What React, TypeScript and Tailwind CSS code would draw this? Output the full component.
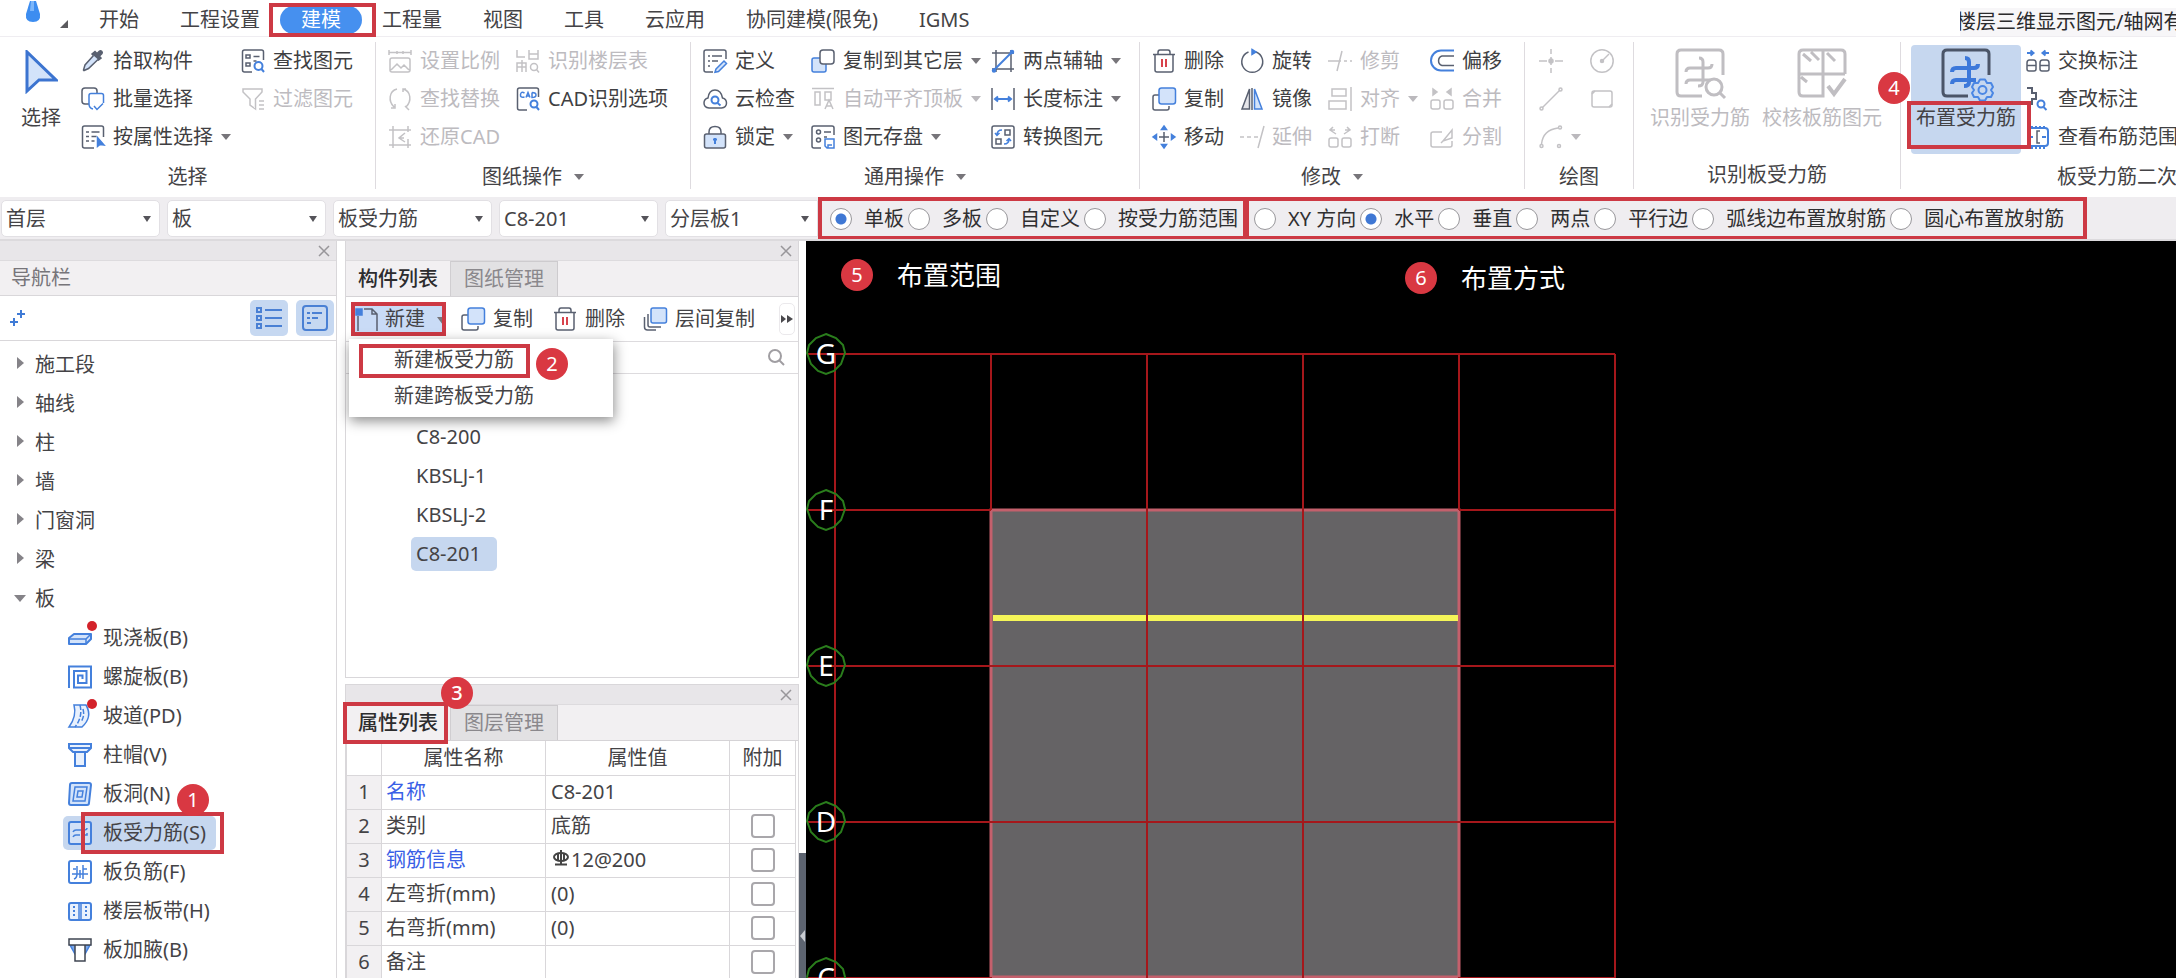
import { useState } from "react";
import type { ReactNode } from "react";
import clsx from "clsx";

const DARK = "#596070";
const BLUE = "#4480dc";
const PALE = "#d3e3fa";
const GRAY = "#c3c2c5";
const RED = "#d8434c";

const icons: Record<string, ReactNode> = {
  dropper: (
    <g stroke={DARK}>
      <path d="M14 2.5l2 2 2.5-2.5c1.500-1 3.500 1 2.500 2.500L18.500 7l1.500 2-2.500 2L11 5z" fill={DARK} />
      <path d="M12.500 6.500L4 16l-1.500 5 .5.5 4.500-2L17 10.500" fill={PALE} />
    </g>
  ),
  batch: (
    <>
      <rect x="1" y="1" width="15" height="16" rx="3" stroke={DARK} />
      <path d="M8 8.500q0-2 2-2h10.500q2 0 2 2V18l-7.500 5.500-3-1.500q-4-1-4-5z" stroke="none" fill="#fff" />
      <path d="M12 22q-4-1-4-5V8.500q0-2 2-2h10.500q2 0 2 2V16" stroke={BLUE} />
      <path d="M13 19l3 3.500 6-6" stroke={BLUE} />
    </>
  ),
  byProp: (
    <>
      <path d="M22.500 12V3q0-2-2-2h-17q-2 0-2 2v18q0 2 2 2H13" stroke={DARK} />
      <path d="M5 7h3M10.500 7h8M5 11.500h3M10.500 11.500h5M5 16h3M10.500 16h3" stroke={DARK} />
      <path d="M16.500 12.500v9l2.500-2 4 .5z" fill={BLUE} stroke={BLUE} />
    </>
  ),
  findEl: (
    <>
      <path d="M22.500 11V3q0-2-2-2h-17q-2 0-2 2v18q0 2 2 2H11" stroke={DARK} />
      <path d="M5 6h4v3H5zM5 14h4v3H5zM12.500 7.500h6M12.500 12h3" stroke={DARK} />
      <circle cx="17.500" cy="17" r="4" stroke={BLUE} strokeWidth="2" />
      <path d="M20.500 20l2.500 3" stroke={BLUE} strokeWidth="2" />
    </>
  ),
  filter: <path d="M2 2h19v3l-6.500 7v10L9 18v-6L2 5zM18 14h5M18 18h5M18 22h5" stroke={GRAY} />,
  scale: <path d="M1 3.500h22M1 1v5M23 1v5M9 2v3M15 2v3M2 11q0-2 2-2h16q2 0 2 2v10q0 2-2 2H4q-2 0-2-2zM3 21l6-6 4 4 3-3 5 5" stroke={GRAY} />,
  replace: <path d="M9 2C1 4 0 14 6 20M3 21h4v-4M15 2c8 2 9 12 3 18M15 5V2h3M17 19l4 4" stroke={GRAY} />,
  restoreCad: <path d="M5 1v22M1 5h22M1 20h22M20 14v9M20 1v6M17 8l-6 5 6 4M11 13h5" stroke={GRAY} />,
  floorTable: (
    <>
      <path d="M1 1v7h8M13 1v9h9V1M13 5h9M1 23v-9h9v9M1 18h9M6 11v12" stroke={GRAY} />
      <circle cx="18" cy="18" r="3.500" stroke={GRAY} />
      <path d="M20.500 20.500l2.500 3" stroke={GRAY} />
    </>
  ),
  cadOptions: (
    <>
      <path d="M22.500 10V3q0-2-2-2h-17q-2 0-2 2v18q0 2 2 2H11" stroke={DARK} />
      <path d="M8.500 6Q5 4 4.500 7.500T8.500 10M10 10.500l2-5 2 5M10.500 9h3M16 5.500v5q4 0 4-2.500t-4-2.500" stroke={BLUE} />
      <circle cx="18" cy="17" r="3.500" stroke={BLUE} strokeWidth="2" />
      <path d="M20.500 20l2.500 3" stroke={BLUE} strokeWidth="2" />
    </>
  ),
  define: (
    <>
      <path d="M23 10V3q0-2-2-2H3Q1 1 1 3v18q0 2 2 2h7M5 7h2M9 7h10M5 12h2M9 12h6M5 17h2" stroke={DARK} />
      <path d="M13 20l8-8 2.500 2.500-8 8-3.500.8z" stroke={BLUE} fill={PALE} />
    </>
  ),
  cloud: (
    <>
      <path d="M6 21q-5-.5-5-5 0-4 4-5Q6 3 12 3t7.500 8q4 1 4 5 0 4.500-5 5z" stroke={DARK} />
      <circle cx="12" cy="13" r="3.500" stroke={BLUE} strokeWidth="2" />
      <path d="M14.500 16l3 2.500" stroke={BLUE} strokeWidth="2" />
    </>
  ),
  lock: (
    <>
      <path d="M6 9V7q0-5.500 6-5.500T18 7v2" stroke={DARK} />
      <rect x="1.500" y="9" width="21" height="14" rx="2" stroke={DARK} fill={PALE} />
      <path d="M12 13v6M10 14.500h4" stroke={BLUE} strokeWidth="2" />
    </>
  ),
  copyFloor: (
    <>
      <rect x="1" y="9" width="14" height="14" rx="2" stroke={BLUE} fill={PALE} />
      <rect x="9" y="1" width="14" height="14" rx="3" stroke={DARK} fill="#fff" />
    </>
  ),
  alignTop: <path d="M1 1.500h22M4 5h5v13H4zM14 5h6v8h-6zM14 22l4-9 4 9M15.500 19h5" stroke={GRAY} />,
  saveEl: (
    <>
      <path d="M23 10V3q0-2-2-2H3Q1 1 1 3v18q0 2 2 2h7M13 7h7M13 12h3" stroke={DARK} />
      <circle cx="7.500" cy="7" r="2" stroke={DARK} />
      <circle cx="7.500" cy="15" r="2" stroke={DARK} />
      <path d="M14 14h9v9h-7l-2-2zM17 23v-3h4" stroke={BLUE} />
    </>
  ),
  twoPoint: (
    <>
      <path d="M5 1v22M1 4h22M1 20h22M20 1v22" stroke={DARK} />
      <path d="M3 21L21 3" stroke={BLUE} strokeWidth="2" />
      <circle cx="3" cy="21.500" r="1.500" fill={BLUE} stroke={BLUE} />
      <circle cx="21" cy="3" r="1.500" fill={BLUE} stroke={BLUE} />
    </>
  ),
  lengthDim: (
    <>
      <path d="M1 1v22M23 1v22" stroke={DARK} />
      <path d="M4 12h16M7 9.500L4 12l3 2.500M17 9.500l3 2.500-3 2.500" stroke={BLUE} strokeWidth="2" />
    </>
  ),
  convert: (
    <>
      <rect x="1" y="1" width="22" height="22" rx="2" stroke={DARK} />
      <path d="M14 5h5v5h-5zM5 14h5v5H5z" stroke={DARK} />
      <path d="M11 5q-5 0-5 5M4 8l2 2.500L8.500 8M13 19q5 0 5-5M15.500 16l2.500-2.500 2 2.500" stroke={BLUE} />
    </>
  ),
  trash: (
    <>
      <path d="M1 5.500h22M6 5V3.500Q6 1 8 1h8q2 0 2 2.500V5M3 6v15q0 2 2 2h14q2 0 2-2V6" stroke={DARK} />
      <path d="M10 10v8M14 10v8" stroke={RED} strokeWidth="2" />
    </>
  ),
  copy: (
    <>
      <path d="M7 8H3q-2 0-2 2v11q0 2 2 2h12q2 0 2-2v-2" stroke={DARK} />
      <rect x="7" y="1" width="16.500" height="16" rx="2.500" stroke={BLUE} fill={PALE} />
    </>
  ),
  move: (
    <>
      <path d="M12 7v10M7 12h10" stroke={DARK} />
      <path d="M12 1l2.500 3.500h-5zM12 23l2.500-3.500h-5zM1 12l3.500 2.500v-5zM23 12l-3.500 2.500v-5z" fill={BLUE} stroke={BLUE} />
    </>
  ),
  rotate: (
    <>
      <path d="M8.500 3a10.500 10.500 0 1 0 7.500 0" stroke={DARK} />
      <path d="M12 .5l4 2.500-4 2.500z" fill={BLUE} stroke={BLUE} />
    </>
  ),
  mirror: (
    <>
      <path d="M9.500 2v20H2z" stroke={DARK} fill="#e6e6ea" />
      <path d="M14.500 2v20H22z" stroke={BLUE} fill={PALE} />
      <path d="M12 1v22" stroke={DARK} />
    </>
  ),
  extend: <path d="M0 12h4M7 12h4M14 12h4M24 1l-6 22" stroke={GRAY} />,
  trim: <path d="M0 12h13M16 12h3M22 12h2M14 2L9 22" stroke={GRAY} />,
  align: <path d="M4 2h14v7H4zM1 14h17v8H1zM23 0v24" stroke={GRAY} />,
  breakUp: (
    <g stroke={GRAY}>
      <rect x="1" y="13" width="9" height="9" rx="2" />
      <rect x="14" y="13" width="9" height="9" rx="2" />
      <path d="M8 9L2 5l3-3M2 5h5M16 9l6-4-3-3M22 5h-5" />
    </g>
  ),
  offset: (
    <>
      <path d="M24 1.500H11a10 10 0 0 0 0 20h13" stroke={BLUE} strokeWidth="2" />
      <path d="M24 7H12a5 5 0 0 0 0 9.500h12" stroke={DARK} />
    </>
  ),
  merge: (
    <g stroke={GRAY}>
      <rect x="1" y="13" width="9" height="9" rx="2" />
      <rect x="14" y="13" width="9" height="9" rx="2" />
      <path d="M3 2v6l4-3zM21 2v6l-4-3z" fill={GRAY} />
    </g>
  ),
  split: <path d="M12 7H3Q1 7 1 9v11q0 2 2 2h17q2 0 2-2v-4M13 16l9-11v8zM11 18l3-3" stroke={GRAY} />,
  point: (
    <g stroke={GRAY}>
      <path d="M12 0v5M12 19v5M0 12h8M16 12h8M12 8v8" />
      <circle cx="12" cy="12" r="2" fill={GRAY} />
    </g>
  ),
  circle: (
    <g stroke={GRAY}>
      <circle cx="12" cy="12" r="11.200" />
      <path d="M12 12l7-7" />
      <circle cx="12" cy="12" r="1.500" fill={GRAY} />
    </g>
  ),
  line: (
    <g stroke={GRAY}>
      <path d="M3.500 20.500l17-17" />
      <circle cx="2.500" cy="21.500" r="1.500" />
      <circle cx="21.500" cy="2.500" r="1.500" />
    </g>
  ),
  rect: (
    <g stroke={GRAY}>
      <rect x="2" y="4" width="20" height="16" rx="2" />
      <path d="M2 7l3-3M19 20l3-3" />
    </g>
  ),
  arc: (
    <g stroke={GRAY}>
      <path d="M2.500 19Q4 5 19 3" />
      <circle cx="2.500" cy="21" r="1.500" />
      <circle cx="21" cy="2.500" r="1.500" />
      <circle cx="20" cy="21" r="1.500" />
    </g>
  ),
  swapDim: (
    <>
      <path d="M1 4h6M4.500 1.500L7.500 4l-3 2.500M23 4h-6M19.500 1.500L16.500 4l3 2.500" stroke={BLUE} strokeWidth="2" />
      <path d="M1 14q0-3 2.500-3h4Q10 11 10 14v6q0 2-2 2H3q-2 0-2-2zM1 16.500h9M14 14q0-3 2.500-3h4q2.500 0 2.500 3v6q0 2-2 2h-5q-2 0-2-2zM14 16.500h9" stroke={DARK} />
    </>
  ),
  checkDim: (
    <>
      <path d="M1 1h5v5h4v6H6v5H3v6" stroke={DARK} strokeWidth="2" />
      <circle cx="15" cy="17" r="3.500" stroke={BLUE} strokeWidth="2" />
      <path d="M17.500 20l3 3" stroke={BLUE} strokeWidth="2" />
    </>
  ),
  viewRange: (
    <>
      <path d="M2 3h17q3 0 3 3v12q0 3-3 3H2" stroke={BLUE} strokeWidth="2" />
      <path d="M2 1v2M6 1v2M10 1v2M14 1v2M18 1v2M2 21v3M6 21v3M10 21v3M14 21v3M18 21v3M3 12h4M16 12h4" stroke={BLUE} strokeWidth="2" />
      <path d="M14 6h-3v12h3" stroke={DARK} />
    </>
  ),
  newFile: (
    <>
      <path d="M9 2h8l5 5v17M17 2v5h5M3 24V9" stroke={DARK} />
      <path d="M1 2h6v6H1z" fill={BLUE} stroke={BLUE} />
    </>
  ),
  copyBetween: (
    <>
      <path d="M5 7v11q0 2 2 2h11M1.500 10v10q0 3 3 3H13" stroke={DARK} />
      <rect x="8" y="1" width="15.500" height="15" rx="2" stroke={BLUE} fill={PALE} />
    </>
  ),
  slab: (
    <g stroke={BLUE}>
      <path d="M1 12l5-4h17v5l-5 5H1z" fill={PALE} strokeWidth="2" strokeLinejoin="round" />
      <path d="M1 13h17l5-5M18 13v5" />
    </g>
  ),
  spiral: <path d="M1 23V1.500h22v21H6V6h12.500v12H10v-7.500h4.500V14" stroke={BLUE} strokeWidth="2" />,
  ramp: (
    <>
      <path d="M6 1h12q7 12-4 22H1Q9 12 6 1z" stroke={BLUE} fill="#e9f1fd" />
      <path d="M12 1q3 12-5 22M15 5q2 7-2 13" stroke={BLUE} strokeDasharray="5 2" />
    </>
  ),
  capital: <path d="M1 1h22v4l-4 4H5L1 5zM1 5h22M7 9v14h10V9" stroke={BLUE} fill="#e9f1fd" strokeWidth="2" />,
  opening: (
    <g stroke={BLUE}>
      <path d="M4 1h17q2 0 2 2l-2 18q0 2-2 2H3q-2 0-2-2L2 3q0-2 2-2z" fill={PALE} strokeWidth="2" />
      <path d="M7 5h12l-2 14H5z" />
      <path d="M10 9h5l-1 6H9z" />
    </g>
  ),
  rebar: (
    <g stroke={BLUE}>
      <rect x="1" y="1" width="22" height="22" rx="2" fill="#d3e1f7" strokeWidth="2" />
      <path d="M5 11q1-2 3-2h8q3 0 3-2M5 16q1-2 3-2h4M19 12v2h-6" />
    </g>
  ),
  negRebar: (
    <g stroke={BLUE}>
      <rect x="1" y="1" width="22" height="22" rx="2" strokeWidth="2" />
      <path d="M5 9h3M15 9h4M4 14h16M9 6v8q0 4-3 5M15 5v14M12 10v8" />
    </g>
  ),
  strip: (
    <g stroke={BLUE}>
      <rect x="1" y="4" width="22" height="17" rx="2" fill="#e9f1fd" strokeWidth="2" />
      <path d="M11 4v17M13 4v17" />
      <path d="M6 7v12M18 7v12" strokeDasharray="2 2" strokeWidth="2" />
    </g>
  ),
  haunch: (
    <>
      <path d="M2 7h20l-5 9H7z" fill="#7ba8ee" stroke={BLUE} />
      <path d="M1 1h22v6H1zM7 7v16h10V7" stroke="#3f4552" fill="#fff" />
    </>
  ),
};

function Icon({ name }: { name: string }) {
  return (
    <svg viewBox="0 0 24 24" className="size-6 shrink-0 overflow-visible" fill="none" strokeWidth="1.500" aria-hidden="true">
      {icons[name]}
    </svg>
  );
}

function Caret({ muted }: { muted?: boolean }) {
  return (
    <svg viewBox="0 0 10 6" className="h-[6px] w-[10px] shrink-0" aria-hidden="true">
      <path d="M0 0h10L5 6z" fill={muted ? "#bbb9bd" : "#77757a"} />
    </svg>
  );
}

function Badge({ n, className }: { n: number; className?: string }) {
  return (
    <span
      className={clsx(
        "flex size-8 items-center justify-center rounded-full bg-[#d93842] text-[20px] leading-none text-white",
        className
      )}
    >
      {n}
    </span>
  );
}

// red frame drawn over a control
function Frame({ className }: { className: string }) {
  return <span className={clsx("pointer-events-none absolute z-10 border-4 border-[#cd3944]", className)} />;
}

interface Tool {
  icon: string;
  label?: string;
  off?: boolean;
  caret?: boolean;
}

function ToolColumn({ tools, className }: { tools: Tool[]; className?: string }) {
  return (
    <div className={clsx("shrink-0", className)}>
      {tools.map((t) => (
        <button
          key={t.icon}
          aria-label={t.label || t.icon}
          className={clsx("flex h-[38px] items-center gap-2", t.off ? "text-[#bdbbbf]" : "text-[#3f3f42]")}
        >
          <Icon name={t.icon} />
          {t.label}
          {t.caret && <Caret muted={t.off} />}
        </button>
      ))}
    </div>
  );
}

function Group({
  label,
  caret,
  className,
  bodyClass,
  labelClass = "justify-center",
  last,
  children,
}: {
  label: string;
  caret?: boolean;
  className: string;
  bodyClass: string;
  labelClass?: string;
  last?: boolean;
  children: ReactNode;
}) {
  return (
    <>
      <section className={clsx("flex flex-col", className)}>
        <div className={clsx("flex h-[114px]", bodyClass)}>{children}</div>
        <div className={clsx("flex h-11 items-center gap-3", labelClass)}>
          {label}
          {caret && <Caret />}
        </div>
      </section>
      {!last && <div className="mb-2 w-px shrink-0 bg-[#dedbdf]" />}
    </>
  );
}

const tabs = ["开始", "工程设置", "建模", "工程量", "视图", "工具", "云应用", "协同建模(限免)", "IGMS"];

function TabBar() {
  const [active, setActive] = useState("建模");
  return (
    <header className="flex h-[37px] shrink-0 items-center border-b border-[#efedf1]">
      <svg viewBox="0 0 16 22" className="mb-3 ml-[25px] h-[22px] w-4 shrink-0" aria-hidden="true">
        <path d="M5 0h6l4 13q1 8-7 8T1 13z" fill="#3d8df0" />
        <path d="M6 0h3v10H5z" fill="#7cb6fa" />
      </svg>
      <svg viewBox="0 0 8 8" className="mt-3 ml-[19px] size-[8px] shrink-0" aria-hidden="true">
        <path d="M8 0v8H0z" fill="#5b5a5e" />
      </svg>
      <nav className="ml-[31px] flex items-center gap-[41px] pt-1">
        {tabs.map((t) =>
          t === active ? (
            <div key={t} className="relative -mx-[21px]">
              <button className="h-[28px] rounded-[14px] bg-[#4690ef] px-[21px] text-white">{t}</button>
              <Frame className="-inset-y-[3px] -right-[14px] -left-[11px]" />
            </div>
          ) : (
            <button key={t} onClick={() => setActive(t)} className="h-[28px] whitespace-nowrap">
              {t}
            </button>
          )
        )}
      </nav>
      <div className="mt-2 ml-auto h-7 w-[216px] overflow-hidden bg-[#f7f6f8] whitespace-nowrap text-[#2b2b2d]">
        <span className="-ml-1">楼层三维显示图元/轴网有</span>
      </div>
    </header>
  );
}

function Ribbon() {
  return (
    <div className="flex h-[160px] shrink-0 overflow-hidden pt-[5px]">
      <Group label="选择" className="w-[375px] shrink-0" bodyClass="pl-[21px]">
        <button className="flex w-10 flex-col items-center pt-2">
          <svg viewBox="0 0 34 44" className="h-11 w-[34px]" aria-hidden="true">
            <path d="M3 2v39l12-11h17z" fill={PALE} stroke="#3c74d0" strokeWidth="3" />
          </svg>
          <span className="mt-[10px]">选择</span>
        </button>
        <ToolColumn
          className="ml-5 w-40"
          tools={[
            { icon: "dropper", label: "拾取构件" },
            { icon: "batch", label: "批量选择" },
            { icon: "byProp", label: "按属性选择", caret: true },
          ]}
        />
        <ToolColumn
          tools={[
            { icon: "findEl", label: "查找图元" },
            { icon: "filter", label: "过滤图元", off: true },
          ]}
        />
      </Group>
      <Group label="图纸操作" caret className="w-[314px] shrink-0" bodyClass="pl-3">
        <ToolColumn
          className="w-32"
          tools={[
            { icon: "scale", label: "设置比例", off: true },
            { icon: "replace", label: "查找替换", off: true },
            { icon: "restoreCad", label: "还原CAD", off: true },
          ]}
        />
        <ToolColumn
          tools={[
            { icon: "floorTable", label: "识别楼层表", off: true },
            { icon: "cadOptions", label: "CAD识别选项" },
          ]}
        />
      </Group>
      <Group label="通用操作" caret className="w-[448px] shrink-0" bodyClass="pl-3">
        <ToolColumn
          className="w-27"
          tools={[
            { icon: "define", label: "定义" },
            { icon: "cloud", label: "云检查" },
            { icon: "lock", label: "锁定", caret: true },
          ]}
        />
        <ToolColumn
          className="w-45"
          tools={[
            { icon: "copyFloor", label: "复制到其它层", caret: true },
            { icon: "alignTop", label: "自动平齐顶板", off: true, caret: true },
            { icon: "saveEl", label: "图元存盘", caret: true },
          ]}
        />
        <ToolColumn
          tools={[
            { icon: "twoPoint", label: "两点辅轴", caret: true },
            { icon: "lengthDim", label: "长度标注", caret: true },
            { icon: "convert", label: "转换图元" },
          ]}
        />
      </Group>
      <Group label="修改" caret className="w-[384px] shrink-0" bodyClass="pl-3">
        <ToolColumn
          className="w-22"
          tools={[
            { icon: "trash", label: "删除" },
            { icon: "copy", label: "复制" },
            { icon: "move", label: "移动" },
          ]}
        />
        <ToolColumn
          className="w-22"
          tools={[
            { icon: "rotate", label: "旋转" },
            { icon: "mirror", label: "镜像" },
            { icon: "extend", label: "延伸", off: true },
          ]}
        />
        <ToolColumn
          className="w-[102px]"
          tools={[
            { icon: "trim", label: "修剪", off: true },
            { icon: "align", label: "对齐", off: true, caret: true },
            { icon: "breakUp", label: "打断", off: true },
          ]}
        />
        <ToolColumn
          tools={[
            { icon: "offset", label: "偏移" },
            { icon: "merge", label: "合并", off: true },
            { icon: "split", label: "分割", off: true },
          ]}
        />
      </Group>
      <Group label="绘图" className="w-[108px] shrink-0" bodyClass="pl-[14px]">
        <ToolColumn className="w-[51px]" tools={[{ icon: "point" }, { icon: "line" }, { icon: "arc", caret: true, off: true }]} />
        <ToolColumn tools={[{ icon: "circle" }, { icon: "rect" }]} />
      </Group>
      <Group label="识别板受力筋" className="w-[266px] shrink-0" bodyClass="pl-4">
        <button className="flex h-full shrink-0 flex-col items-center pt-[6px] text-[#bdbbbf]">
          <svg viewBox="0 0 50 50" className="size-[50px] overflow-visible" fill="none" stroke="#c0bec2" strokeWidth="3" aria-hidden="true">
            <path d="M48 27V6q0-4-4-4H6Q2 2 2 6v38q0 4 4 4h21" />
            <path d="M11 24q0-4 4-4h18q4 0 4-4M11 36q0-4 4-4h20M24 10q4 0 4 4v20q0 4-5 4" />
            <circle cx="39" cy="39" r="8" />
            <path d="M44 44l6 6" />
          </svg>
          <span className="mt-[6px]">识别受力筋</span>
        </button>
        <button className="ml-3 flex h-full shrink-0 flex-col items-center pt-[6px] text-[#bdbbbf]">
          <svg viewBox="0 0 50 50" className="size-[50px]" fill="none" stroke="#c0bec2" strokeWidth="3" aria-hidden="true">
            <path d="M48 26V6q0-4-4-4H6Q2 2 2 6v38q0 4 4 4h20V2M2 26h46M6 6l8 7M14 4l8 8M30 5l8 8M4 29l6 5" />
            <path d="M31 38l6 8 11-15" strokeWidth="4" />
          </svg>
          <span className="mt-[6px]">校核板筋图元</span>
        </button>
      </Group>
      <Group
        last
        label="板受力筋二次编辑"
        className="min-w-0 flex-1"
        bodyClass="pl-[10px]"
        labelClass="pl-[156px] whitespace-nowrap"
      >
        <div className="relative shrink-0">
          <button className="mt-[3px] flex h-[109px] w-[110px] flex-col items-center rounded-[4px] bg-[#c6d7ef] pt-[3px]">
            <svg viewBox="0 0 50 50" className="size-[50px] shrink-0 overflow-visible" fill="none" stroke="#4b5568" strokeWidth="3" aria-hidden="true">
              <path d="M48 27V6q0-4-4-4H6Q2 2 2 6v38q0 4 4 4h21" />
              <path d="M11 24q0-4 4-4h18q4 0 4-4M11 36q0-4 4-4h20M24 10q4 0 4 4v20q0 4-5 4" stroke="#3c78da" strokeWidth="4" />
              <path d="M39 31.500h5l2 3.500h4l2 4-2 3 2 3-2 4h-4l-2 3.500h-5L37 49h-4l-2-4 2-3-2-3 2-4h4z" stroke="#4b87e4" strokeWidth="2" strokeLinejoin="round" />
              <circle cx="41.500" cy="42" r="4" stroke="#4b87e4" strokeWidth="2" />
            </svg>
            <span className="mt-[6px]">布置受力筋</span>
          </button>
          <Frame className="top-[59px] -right-[10px] -left-[4px] h-12" />
          <Badge n={4} className="absolute top-[30px] -left-[33px] z-10" />
        </div>
        <ToolColumn
          className="ml-[5px] whitespace-nowrap"
          tools={[
            { icon: "swapDim", label: "交换标注" },
            { icon: "checkDim", label: "查改标注" },
            { icon: "viewRange", label: "查看布筋范围" },
          ]}
        />
      </Group>
    </div>
  );
}

function Combo({ label, value, className = "w-[159px] rounded-[5px]" }: { label: string; value: string; className?: string }) {
  return (
    <div className={clsx("relative h-[37px] shrink-0 border border-[#e2e0e4] bg-white", className)}>
      <select aria-label={label} className="h-full w-full appearance-none bg-transparent pt-[2px] pl-1">
        <option>{value}</option>
      </select>
      <svg viewBox="0 0 8 6" className="pointer-events-none absolute top-[15px] right-2 h-[6px] w-2" aria-hidden="true">
        <path d="M0 0h8L4 6z" fill="#55545a" />
      </svg>
    </div>
  );
}

function RadioBox({ name, options, initial, className }: { name: string; options: string[]; initial: string; className: string }) {
  const [value, setValue] = useState(initial);
  return (
    <div
      role="radiogroup"
      aria-label={name}
      className={clsx("flex h-[43px] shrink-0 items-center gap-1 border-4 border-[#cd3944] pt-px text-[#2f2f31]", className)}
    >
      {options.map((o) => (
        <label key={o} className="flex shrink-0 items-center gap-3 whitespace-nowrap">
          <input
            type="radio"
            name={name}
            checked={value === o}
            onChange={() => setValue(o)}
            className="size-[22px] appearance-none rounded-full border border-[#98979b] bg-white checked:bg-[radial-gradient(circle,#3f78d4_5px,#fff_6px)]"
          />
          {o}
        </label>
      ))}
    </div>
  );
}

function OptionBar() {
  return (
    <div className="flex h-[44px] shrink-0 items-center overflow-hidden border-b-2 border-[#dcdadd] bg-[#efedf0] pl-px">
      <div className="flex gap-[7px]">
        <Combo label="楼层" value="首层" />
        <Combo label="构件大类" value="板" />
        <Combo label="构件类型" value="板受力筋" />
        <Combo label="构件" value="C8-201" />
        <Combo label="分层" value="分层板1" className="w-[153px] rounded-l-[5px]" />
      </div>
      <RadioBox name="布置范围" initial="单板" options={["单板", "多板", "自定义", "按受力筋范围"]} className="w-[429px] pl-2" />
      <RadioBox
        name="布置方式"
        initial="水平"
        options={["XY 方向", "水平", "垂直", "两点", "平行边", "弧线边布置放射筋", "圆心布置放射筋"]}
        className="-ml-[2px] w-[842px] pl-[5px]"
      />
    </div>
  );
}

function PanelStrip() {
  return (
    <div className="flex h-5 items-center justify-end border-b border-[#dddbde] bg-[#e8e6e9] pr-[6px]">
      <button aria-label="关闭">
        <svg viewBox="0 0 12 12" className="size-3" stroke="#98969a" strokeWidth="1.500" aria-hidden="true">
          <path d="M1 1l10 10M11 1L1 11" />
        </svg>
      </button>
    </div>
  );
}

const categories = ["施工段", "轴线", "柱", "墙", "门窗洞", "梁"];

const slabItems = [
  { icon: "slab", label: "现浇板(B)", dot: true },
  { icon: "spiral", label: "螺旋板(B)" },
  { icon: "ramp", label: "坡道(PD)", dot: true },
  { icon: "capital", label: "柱帽(V)" },
  { icon: "opening", label: "板洞(N)" },
  { icon: "rebar", label: "板受力筋(S)", selected: true },
  { icon: "negRebar", label: "板负筋(F)" },
  { icon: "strip", label: "楼层板带(H)" },
  { icon: "haunch", label: "板加腋(B)" },
];

function NavPanel() {
  return (
    <aside className="w-[337px] shrink-0 border-r border-[#d9d7da]">
      <PanelStrip />
      <h2 className="flex h-[35px] items-center border-b border-[#d9d7da] bg-[#f2f0f2] pl-[11px] text-[#77757a]">导航栏</h2>
      <div className="flex h-[45px] items-center border-b border-[#d9d7da] pr-[2px] pl-[10px]">
        <button aria-label="添加">
          <svg viewBox="0 0 16 18" className="h-[18px] w-4" stroke="#3f7bd6" strokeWidth="2" aria-hidden="true">
            <path d="M7 5h8M11 1v8M0 13h8M4 9v8" />
          </svg>
        </button>
        <button aria-label="列表" className="ml-auto flex h-9 w-[38px] items-center justify-center rounded-[5px] bg-[#c6d8f1]">
          <svg viewBox="0 0 26 22" className="h-[22px] w-[26px]" fill="none" stroke="#4a80d4" strokeWidth="2" aria-hidden="true">
            <path d="M9 3h17M9 11h17M9 19h17M1 1h4v4H1zM1 9h4v4H1zM1 17h4v4H1z" />
          </svg>
        </button>
        <button aria-label="详情" className="ml-2 flex h-9 w-[38px] items-center justify-center rounded-[5px] bg-[#c6d8f1]">
          <svg viewBox="0 0 26 26" className="size-[26px]" fill="none" stroke="#4a80d4" strokeWidth="2" aria-hidden="true">
            <rect x="1" y="1" width="24" height="24" rx="3" />
            <path d="M5 8h3M10 8h10M5 13h3M10 13h6M5 18h4" />
          </svg>
        </button>
      </div>
      <ul className="pt-1">
        {categories.map((c) => (
          <li key={c} className="flex h-[39px] items-center pl-[17px]">
            <svg viewBox="0 0 7 12" className="mr-[11px] mb-1 h-3 w-[7px]" aria-hidden="true">
              <path d="M0 0v12l7-6z" fill="#858388" />
            </svg>
            {c}
          </li>
        ))}
        <li>
          <div className="flex h-[39px] items-center pl-[14px]">
            <svg viewBox="0 0 12 7" className="mr-[9px] h-[7px] w-3" aria-hidden="true">
              <path d="M0 0h12L6 7z" fill="#858388" />
            </svg>
            板
          </div>
          <ul className="pl-[63px]">
            {slabItems.map((s) => (
              <li key={s.label} className="flex h-[39px] items-center">
                <div
                  className={clsx(
                    "relative flex h-[34px] items-center gap-[11px] rounded-[5px] pl-[5px]",
                    s.selected && "w-[153px] bg-[#c6d7ef]"
                  )}
                >
                  <Icon name={s.icon} />
                  {s.label}
                  {s.dot && <span className="absolute top-0 left-6 size-[10px] rounded-full bg-[#d3222a]" />}
                  {s.selected && (
                    <>
                      <Frame className="-inset-y-[4px] -right-2 left-[18px]" />
                      <Badge n={1} className="absolute -top-8 left-[114px] z-20" />
                    </>
                  )}
                </div>
              </li>
            ))}
          </ul>
        </li>
      </ul>
    </aside>
  );
}

function PanelTabs({ active, other, framed }: { active: string; other: string; framed?: boolean }) {
  return (
    <div className="flex h-9 border-b border-[#d5d3d6] bg-[#f2f0f2]">
      <button className="relative flex w-[105px] items-center justify-center border-r border-[#d0ced1] font-medium text-[#2c2c2e]">
        {active}
        {framed && (
          <>
            <Frame className="-top-[3px] right-[2px] -bottom-[4px] -left-[3px]" />
            <Badge n={3} className="absolute -top-7 left-[95px] z-20" />
          </>
        )}
      </button>
      <button className="w-[107px] border-t border-r border-[#cdcbce] bg-[#e2e1e3] text-[#8a888c]">{other}</button>
    </div>
  );
}

const components = ["C8-200", "KBSLJ-1", "KBSLJ-2", "C8-201"];

function ComponentPanel() {
  const [selected, setSelected] = useState("C8-201");
  return (
    <section className="border-x border-b border-[#d9d7da]">
      <PanelStrip />
      <PanelTabs active="构件列表" other="图纸管理" />
      <div className="flex h-[45px] items-center border-b border-[#dddbde] pl-[5px]">
        <div className="relative">
          <button className="flex h-[34px] w-[95px] items-center gap-[6px] bg-[#c9dbf6] pl-1">
            <Icon name="newFile" />
            新建
          </button>
          <svg viewBox="0 0 6 8" className="absolute top-[15px] right-[3px] h-2 w-[6px]" aria-hidden="true">
            <path d="M0 0h6v8z" fill="#77757a" />
          </svg>
          <Frame className="inset-0" />
          <div className="absolute top-[37px] -left-[2px] z-30 w-[264px] bg-white py-[3px] shadow-[1px_4px_12px_rgba(0,0,0,0.450)]">
            <button className="relative flex h-[36px] items-center pl-[45px]">
              新建板受力筋
              <Frame className="-right-[16px] bottom-0 left-[10px] h-[34px]" />
              <Badge n={2} className="absolute top-[6px] -right-[54px]" />
            </button>
            <button className="flex h-[36px] items-center pl-[45px]">新建跨板受力筋</button>
          </div>
        </div>
        <button className="ml-[15px] flex items-center gap-2">
          <Icon name="copy" />
          复制
        </button>
        <button className="ml-5 flex items-center gap-2">
          <Icon name="trash" />
          删除
        </button>
        <button className="ml-[18px] flex items-center gap-2">
          <Icon name="copyBetween" />
          层间复制
        </button>
        <button aria-label="更多" className="mr-[3px] ml-auto flex h-8 w-4 items-center justify-center rounded-[5px] border border-[#ebe9ec]">
          <svg viewBox="0 0 12 8" className="h-2 w-3 shrink-0" aria-hidden="true">
            <path d="M0 0l5 4-5 4zM6 0l6 4-6 4z" fill="#4a494d" />
          </svg>
        </button>
      </div>
      <div className="flex h-8 items-center border-b border-[#dddbde] pr-[13px]">
        <input type="text" aria-label="搜索构件" className="min-w-0 flex-1 outline-none" />
        <svg viewBox="0 0 17 17" className="size-[17px]" fill="none" stroke="#a09ea2" strokeWidth="2" aria-hidden="true">
          <circle cx="7" cy="7" r="6" />
          <path d="M11 11l5 5" />
        </svg>
      </div>
      <ul className="h-[303px] pt-[43px] pl-[65px]">
        {components.map((c) => (
          <li key={c} className="flex h-[39px] items-center">
            <button
              onClick={() => setSelected(c)}
              className={clsx("h-[34px] w-[86px] rounded-[5px] pl-[5px] text-left whitespace-nowrap", selected === c && "bg-[#c6d7ef]")}
            >
              {c}
            </button>
          </li>
        ))}
      </ul>
    </section>
  );
}

const properties = [
  { name: "名称", value: "C8-201", key: true, noCheck: true },
  { name: "类别", value: "底筋" },
  { name: "钢筋信息", value: "12@200", key: true, rebar: true },
  { name: "左弯折(mm)", value: "(0)" },
  { name: "右弯折(mm)", value: "(0)" },
  { name: "备注", value: "" },
];

function PropertyPanel() {
  return (
    <section className="mt-[6px] border-x border-t border-[#d9d7da]">
      <PanelStrip />
      <PanelTabs active="属性列表" other="图层管理" framed />
      <table className="w-[450px] table-fixed border-collapse">
        <thead>
          <tr className="h-[34px] [&>th]:border [&>th]:border-t-0 [&>th]:border-[#d9d7da] [&>th]:p-0 [&>th]:leading-none [&>th]:font-normal">
            <th className="w-[35px] border-l-0" aria-label="序号" />
            <th className="w-[164px]">属性名称</th>
            <th className="w-[184px]">属性值</th>
            <th>附加</th>
          </tr>
        </thead>
        <tbody>
          {properties.map((p, i) => (
            <tr key={p.name} className="h-[34px] [&>td]:border [&>td]:border-[#d9d7da] [&>td]:py-0 [&>td]:leading-none">
              <td className="border-l-0 bg-[#f2f0f2] p-0 text-center">{i + 1}</td>
              <td className={clsx("px-1", p.key && "text-[#3a5fe6]")}>{p.name}</td>
              <td className="px-[5px]">
                <span className="flex items-center">
                  {p.rebar && (
                    <svg viewBox="0 0 16 16" className="mr-[2px] mb-1 ml-[2px] size-4" fill="none" stroke="#444" strokeWidth="2" aria-hidden="true">
                      <ellipse cx="8" cy="7" rx="7" ry="4" />
                      <path d="M8 0v15M5 3v8M11 3v8M2 14.500h12" />
                    </svg>
                  )}
                  {p.value}
                </span>
              </td>
              <td className="p-0">
                {!p.noCheck && (
                  <input
                    type="checkbox"
                    aria-label={p.name}
                    className="mx-auto block size-6 appearance-none rounded-[4px] border-2 border-[#a9a7ab] bg-white checked:bg-[#4480dc]"
                  />
                )}
              </td>
            </tr>
          ))}
        </tbody>
      </table>
    </section>
  );
}

const STEP = 156;
const axes = ["G", "F", "E", "D", "C"];

function Drawing() {
  return (
    <svg viewBox="-1 0 820 780" width="820" height="780" className="absolute top-0 left-0" fill="none" aria-label="平面图">
      <rect x="184" y="269" width="468" height="467" fill="#656365" stroke="#c4606c" strokeWidth="3" />
      <path d="M186 377h465" stroke="#f5f558" strokeWidth="6" />
      {[0, 2, 3, 5].map((i) => (
        <path key={i} d={`M${28 + i * STEP} 113V780`} stroke="#a5171b" strokeWidth="2" />
      ))}
      <path d="M184 113v156M652 113v156M184 736v50M652 736v50" stroke="#a5171b" strokeWidth="2" />
      {axes.map((a, i) => {
        const y = 113 + i * STEP;
        return (
          <g key={a}>
            {a === "F" || a === "C" ? (
              <path d={`M1 ${y}h183M652 ${y}h156`} stroke="#a5171b" strokeWidth="2" />
            ) : (
              <path d={`M1 ${y}h807`} stroke="#a5171b" strokeWidth="2" />
            )}
            <path
              d="M0-20l10 4 7 7 2 8-4 11-7 7-8 3-8-3-7-7-4-11 2-8 7-7z"
              transform={`translate(19 ${y})`}
              stroke="#2a7d1c"
              strokeWidth="2"
            />
            <text x="19" y={y + 10} textAnchor="middle" fontSize="28" fill="#fff">
              {a}
            </text>
          </g>
        );
      })}
    </svg>
  );
}

function Canvas() {
  return (
    <main className="relative min-w-0 flex-1 overflow-hidden bg-black">
      <Drawing />
      <div className="absolute top-[18px] left-[35px] flex items-center gap-6 text-[26px] text-white">
        <Badge n={5} />
        布置范围
      </div>
      <div className="absolute top-[21px] left-[599px] flex items-center gap-6 text-[26px] text-white">
        <Badge n={6} />
        布置方式
      </div>
    </main>
  );
}

export default function App() {
  return (
    <div className="flex h-screen flex-col overflow-hidden bg-white font-['Noto_Sans','Noto_Sans_CJK_SC',sans-serif] text-[20px] leading-7 text-[#444346]">
      <TabBar />
      <Ribbon />
      <OptionBar />
      <div className="flex min-h-0 flex-1">
        <NavPanel />
        <div className="ml-2 w-[454px] shrink-0">
          <ComponentPanel />
          <PropertyPanel />
        </div>
        <div className="flex w-[7px] shrink-0 items-end">
          <button aria-label="收起" className="flex h-[125px] w-full items-center justify-center bg-[#5d6470] pt-10">
            <svg viewBox="0 0 5 12" className="h-3 w-[5px]" aria-hidden="true">
              <path d="M5 0v12L0 6z" fill="#c9ccd2" />
            </svg>
          </button>
        </div>
        <Canvas />
      </div>
    </div>
  );
}
